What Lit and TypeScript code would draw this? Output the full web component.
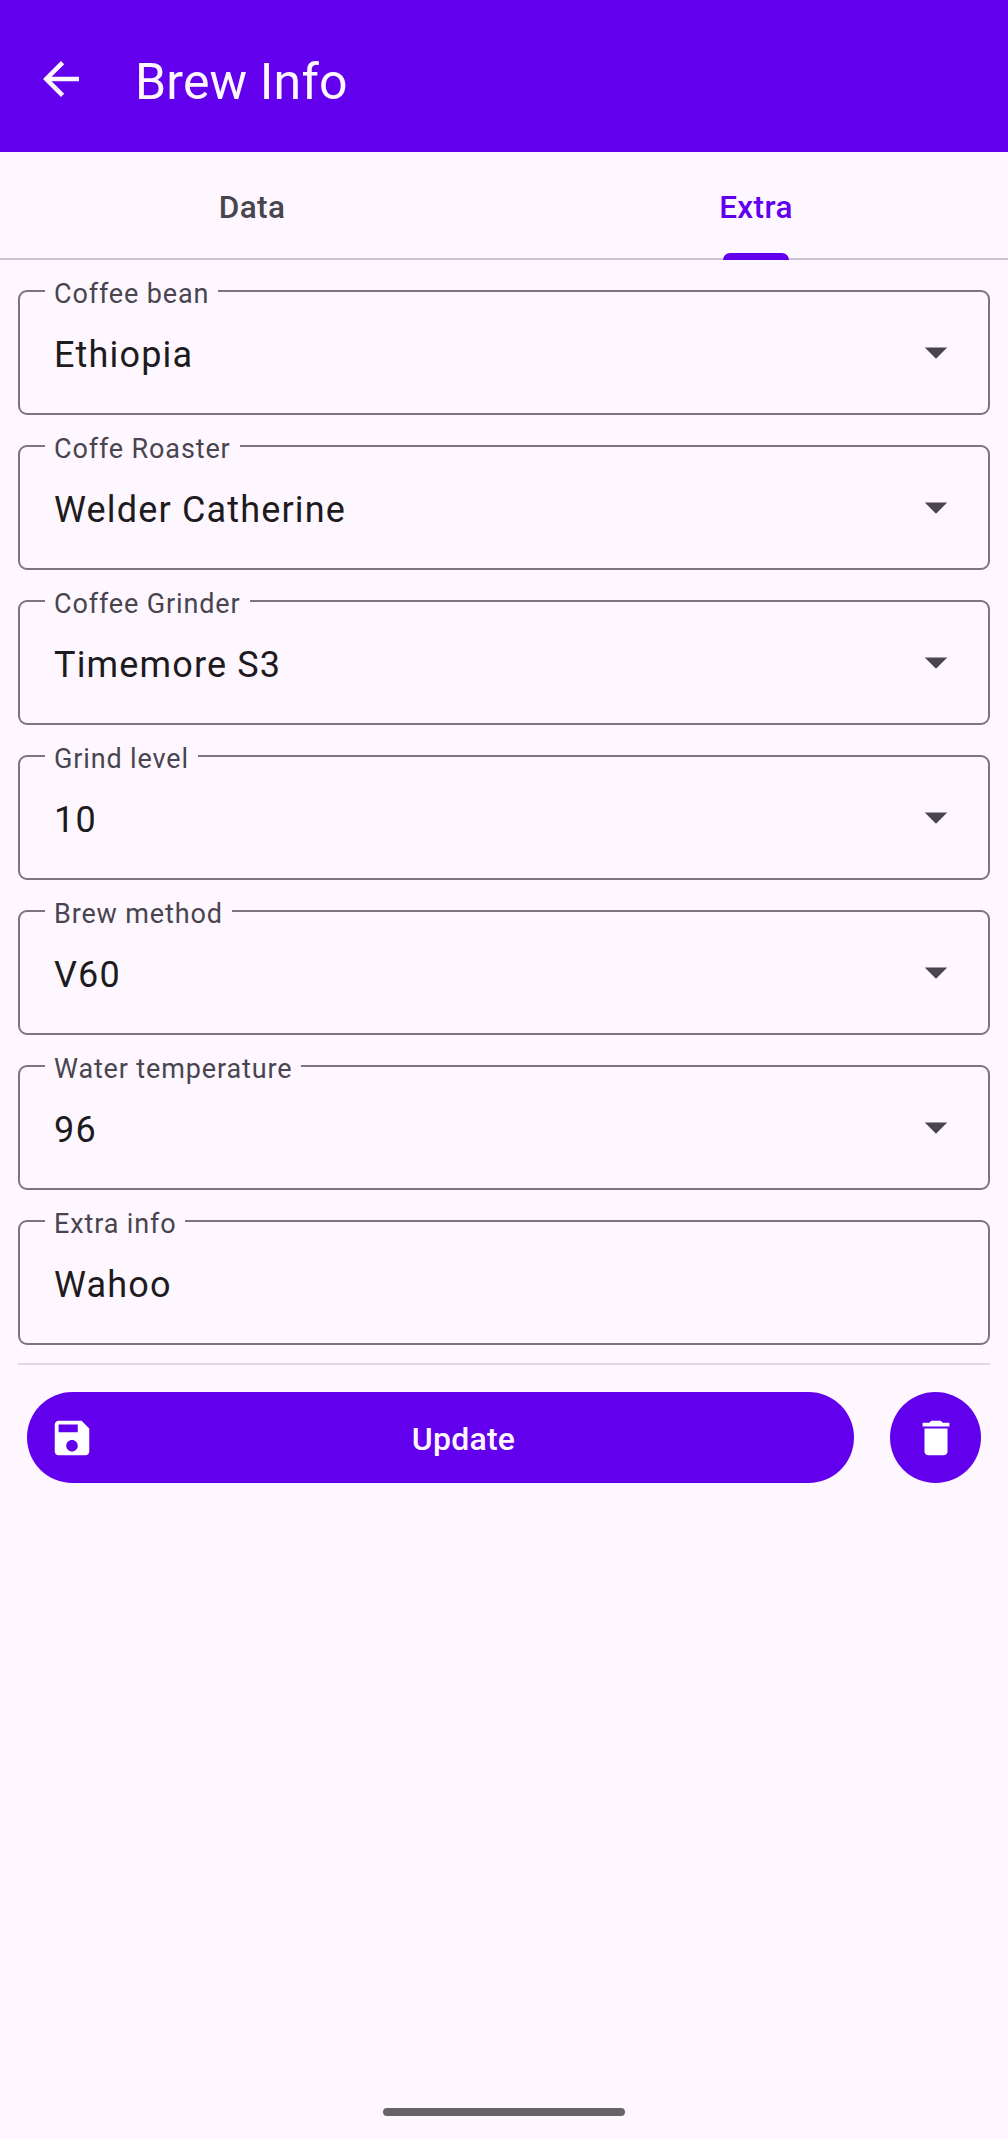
import { LitElement, html, css, nothing } from "lit";
import { customElement, property } from "lit/decorators.js";

@customElement("brew-field")
class BrewField extends LitElement {
  @property() label = "";
  @property() value = "";
  @property({ type: Boolean }) dropdown = false;

  static styles = css`
    :host { display: block; }
    .field {
      box-sizing: border-box;
      height: 125px;
      margin: 0;
      padding: 0 25px;
      min-width: 0;
      border: 2px solid #7a757f;
      border-radius: 9px;
    }
    .legend {
      height: 2px;
      padding: 0 9px;
      overflow: visible;
    }
    .label {
      display: block;
      margin-top: -14px;
      font-size: 27px;
      line-height: 36px;
      letter-spacing: 0.86px;
      color: #49454f;
      white-space: nowrap;
    }
    .row {
      display: flex;
      align-items: center;
      justify-content: space-between;
      height: 121px;
      padding-left: 9px;
    }
    .value {
      font-size: 36px;
      line-height: 54px;
      padding-top: 5px;
      letter-spacing: 1.16px;
      color: #1d1b20;
    }
    .arrow { width: 54px; height: 54px; margin-bottom: 2px; fill: #49454f; }
  `;

  render() {
    return html`<fieldset class="field">
      <legend class="legend"><span class="label">${this.label}</span></legend>
      <div class="row">
        <span class="value">${this.value}</span>
        ${this.dropdown
          ? html`<svg class="arrow" viewBox="0 0 24 24"><path d="M7 10l5 5 5-5z" /></svg>`
          : nothing}
      </div>
    </fieldset>`;
  }
}

const FIELDS = [
  { label: "Coffee bean", value: "Ethiopia", dropdown: true },
  { label: "Coffe Roaster", value: "Welder Catherine", dropdown: true },
  { label: "Coffee Grinder", value: "Timemore S3", dropdown: true },
  { label: "Grind level", value: "10", dropdown: true },
  { label: "Brew method", value: "V60", dropdown: true },
  { label: "Water temperature", value: "96", dropdown: true },
  { label: "Extra info", value: "Wahoo", dropdown: false },
];

@customElement("app-root")
class AppRoot extends LitElement {
  static styles = css`
    :host {
      display: flex;
      flex-direction: column;
      box-sizing: border-box;
      width: 100%;
      height: 2139px;
      background: #fef7ff;
      font-family: Roboto, "Liberation Sans", sans-serif;
    }
    .bar {
      box-sizing: border-box;
      height: 152px;
      padding: 7px 0 0 34px;
      display: flex;
      align-items: center;
      gap: 47px;
      background: #6200ee;
      color: #fef7ff;
    }
    .back { width: 54px; height: 54px; margin-bottom: 2px; fill: #fef7ff; }
    .title {
      margin: 0;
      padding-top: 4px;
      font-size: 50px;
      line-height: 64px;
      font-weight: 400;
      letter-spacing: 0.15px;
    }
    .tabs {
      box-sizing: border-box;
      height: 108px;
      display: grid;
      grid-template-columns: 1fr 1fr;
      border-bottom: 2px solid #cac4d0;
    }
    .tab {
      display: grid;
      grid-template-rows: 101px 7px;
      height: 108px;
      justify-items: center;
      font-size: 31.5px;
      line-height: 112px;
      font-weight: 500;
      letter-spacing: 0.4px;
      color: #49454f;
    }
    .active { color: #6200ee; }
    .indicator {
      width: 66px;
      height: 7px;
      border-radius: 7px 7px 0 0;
      background: #6200ee;
    }
    .form {
      display: flex;
      flex-direction: column;
      gap: 30px;
      padding: 30px 18px 0;
    }
    .rule { height: 2px; margin: 18px 18px 0; background: #e0d9e4; }
    .actions {
      display: flex;
      gap: 36px;
      padding: 27px 27px 0;
    }
    .update {
      flex: 1;
      box-sizing: border-box;
      height: 91px;
      padding: 0 22px;
      border-radius: 46px;
      display: flex;
      align-items: center;
      background: #6200ee;
      color: #fef7ff;
    }
    .caption {
      flex: 1;
      padding-top: 3px;
      text-align: center;
      font-size: 32px;
      line-height: 45px;
      font-weight: 500;
      letter-spacing: 0.23px;
    }
    .delete {
      width: 91px;
      height: 91px;
      border-radius: 50%;
      display: grid;
      place-items: center;
      background: #6200ee;
    }
    .icon { width: 46px; height: 46px; fill: #fff; }
    .spacer { flex: 1; }
    .handle {
      width: 242px;
      height: 8px;
      margin: 0 auto 23px;
      border-radius: 4px;
      background: #666466;
    }
  `;

  render() {
    return html`
      <header class="bar">
        <svg class="back" viewBox="0 0 24 24">
          <path d="M20 11H7.83l5.59-5.59L12 4l-8 8 8 8 1.41-1.41L7.83 13H20v-2z" />
        </svg>
        <h1 class="title">Brew Info</h1>
      </header>
      <nav class="tabs">
        <div class="tab"><span>Data</span></div>
        <div class="tab active"><span>Extra</span><span class="indicator"></span></div>
      </nav>
      <main class="form">
        ${FIELDS.map(
          (f) => html`<brew-field .label=${f.label} .value=${f.value} .dropdown=${f.dropdown}></brew-field>`
        )}
      </main>
      <div class="rule"></div>
      <div class="actions">
        <div class="update">
          <svg class="icon" viewBox="0 0 24 24">
            <path d="M17 3H5c-1.11 0-2 .9-2 2v14c0 1.1.89 2 2 2h14c1.1 0 2-.9 2-2V7l-4-4zm-5 16c-1.66 0-3-1.34-3-3s1.34-3 3-3 3 1.34 3 3-1.34 3-3 3zm3-10H5V5h10v4z" />
          </svg>
          <span class="caption">Update</span>
        </div>
        <div class="delete">
          <svg class="icon" viewBox="0 0 24 24">
            <path d="M6 19c0 1.1.9 2 2 2h8c1.1 0 2-.9 2-2V7H6v12zM19 4h-3.5l-1-1h-5l-1 1H5v2h14V4z" />
          </svg>
        </div>
      </div>
      <div class="spacer"></div>
      <div class="handle"></div>
    `;
  }
}
